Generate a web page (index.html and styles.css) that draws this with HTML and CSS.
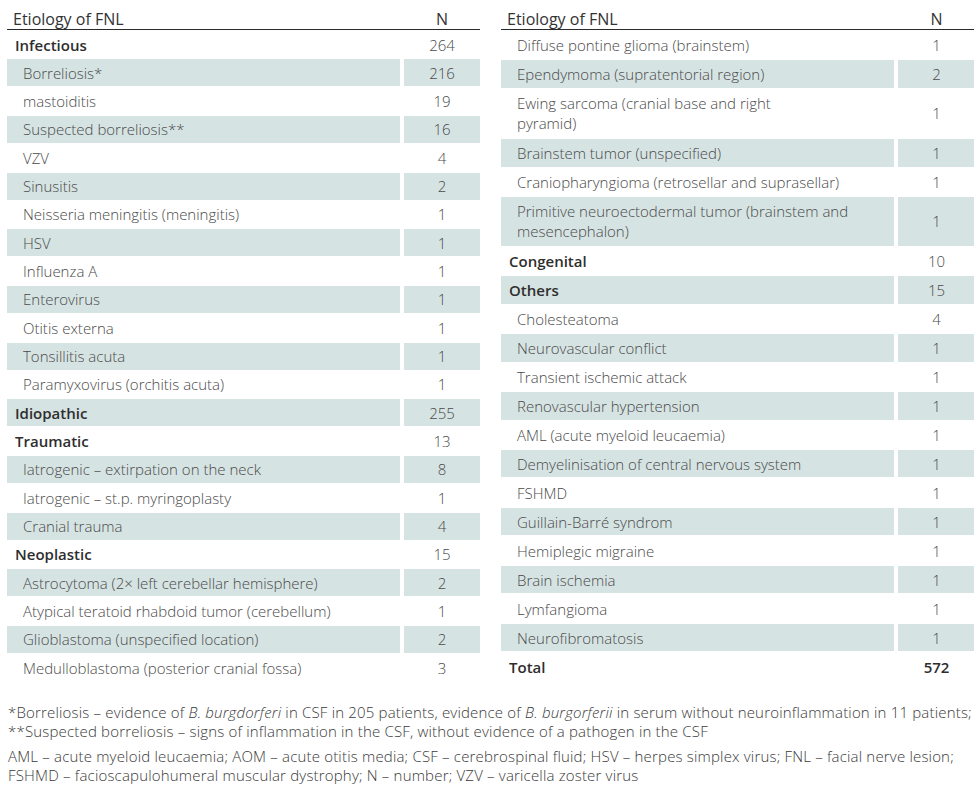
FILE: index.html
```html
<!DOCTYPE html>
<html lang="en">
<head>
<meta charset="utf-8">
<title>Etiology of FNL</title>
<link rel="stylesheet" href="styles.css">
</head>
<body>
<div class="page">
  <div class="tables">
    <div class="tbl left">
      <div class="row head"><div class="name">Etiology of FNL</div><div class="n">N</div></div>
      <div class="body">
        <div class="row cat"><div class="name">Infectious</div><div class="n">264</div></div>
        <div class="row sh"><div class="name">Borreliosis*</div><div class="n">216</div></div>
        <div class="row"><div class="name">mastoiditis</div><div class="n">19</div></div>
        <div class="row sh"><div class="name">Suspected borreliosis**</div><div class="n">16</div></div>
        <div class="row"><div class="name">VZV</div><div class="n">4</div></div>
        <div class="row sh"><div class="name">Sinusitis</div><div class="n">2</div></div>
        <div class="row"><div class="name">Neisseria meningitis (meningitis)</div><div class="n">1</div></div>
        <div class="row sh"><div class="name">HSV</div><div class="n">1</div></div>
        <div class="row"><div class="name">Influenza A</div><div class="n">1</div></div>
        <div class="row sh"><div class="name">Enterovirus</div><div class="n">1</div></div>
        <div class="row"><div class="name">Otitis externa</div><div class="n">1</div></div>
        <div class="row sh"><div class="name">Tonsillitis acuta</div><div class="n">1</div></div>
        <div class="row"><div class="name">Paramyxovirus (orchitis acuta)</div><div class="n">1</div></div>
        <div class="row cat sh"><div class="name">Idiopathic</div><div class="n">255</div></div>
        <div class="row cat"><div class="name">Traumatic</div><div class="n">13</div></div>
        <div class="row sh"><div class="name">Iatrogenic – extirpation on the neck</div><div class="n">8</div></div>
        <div class="row"><div class="name">Iatrogenic – st.p. myringoplasty</div><div class="n">1</div></div>
        <div class="row sh"><div class="name">Cranial trauma</div><div class="n">4</div></div>
        <div class="row cat"><div class="name">Neoplastic</div><div class="n">15</div></div>
        <div class="row sh"><div class="name">Astrocytoma (2× left cerebellar hemisphere)</div><div class="n">2</div></div>
        <div class="row"><div class="name">Atypical teratoid rhabdoid tumor (cerebellum)</div><div class="n">1</div></div>
        <div class="row sh"><div class="name">Glioblastoma (unspecified location)</div><div class="n">2</div></div>
        <div class="row"><div class="name">Medulloblastoma (posterior cranial fossa)</div><div class="n">3</div></div>
      </div>
    </div>
    <div class="tbl right">
      <div class="row head"><div class="name">Etiology of FNL</div><div class="n">N</div></div>
      <div class="body">
        <div class="row"><div class="name">Diffuse pontine glioma (brainstem)</div><div class="n">1</div></div>
        <div class="row sh"><div class="name">Ependymoma (supratentorial region)</div><div class="n">2</div></div>
        <div class="row two"><div class="name">Ewing sarcoma (cranial base and right<br>pyramid)</div><div class="n">1</div></div>
        <div class="row sh"><div class="name">Brainstem tumor (unspecified)</div><div class="n">1</div></div>
        <div class="row"><div class="name">Craniopharyngioma (retrosellar and suprasellar)</div><div class="n">1</div></div>
        <div class="row sh two"><div class="name">Primitive neuroectodermal tumor (brainstem and<br>mesencephalon)</div><div class="n">1</div></div>
        <div class="row cat"><div class="name">Congenital</div><div class="n">10</div></div>
        <div class="row cat sh"><div class="name">Others</div><div class="n">15</div></div>
        <div class="row"><div class="name">Cholesteatoma</div><div class="n">4</div></div>
        <div class="row sh"><div class="name">Neurovascular conflict</div><div class="n">1</div></div>
        <div class="row"><div class="name">Transient ischemic attack</div><div class="n">1</div></div>
        <div class="row sh"><div class="name">Renovascular hypertension</div><div class="n">1</div></div>
        <div class="row"><div class="name">AML (acute myeloid leucaemia)</div><div class="n">1</div></div>
        <div class="row sh"><div class="name">Demyelinisation of central nervous system</div><div class="n">1</div></div>
        <div class="row"><div class="name">FSHMD</div><div class="n">1</div></div>
        <div class="row sh"><div class="name">Guillain-Barré syndrom</div><div class="n">1</div></div>
        <div class="row"><div class="name">Hemiplegic migraine</div><div class="n">1</div></div>
        <div class="row sh"><div class="name">Brain ischemia</div><div class="n">1</div></div>
        <div class="row"><div class="name">Lymfangioma</div><div class="n">1</div></div>
        <div class="row sh"><div class="name">Neurofibromatosis</div><div class="n">1</div></div>
        <div class="row cat total"><div class="name">Total</div><div class="n">572</div></div>
      </div>
    </div>
  </div>
  <div class="notes">
    <p>*Borreliosis – evidence of <i>B. burgdorferi</i> in CSF in 205 patients, evidence of <i>B. burgorferii</i> in serum without neuroinflammation in 11 patients;<br>**Suspected borreliosis – signs of inflammation in the CSF, without evidence of a pathogen in the CSF</p>
    <p>AML – acute myeloid leucaemia; AOM – acute otitis media; CSF – cerebrospinal fluid; HSV – herpes simplex virus; FNL – facial nerve lesion;<br>FSHMD – facioscapulohumeral muscular dystrophy; N – number; VZV – varicella zoster virus</p>
  </div>
</div>
</body>
</html>
```
FILE: styles.css
```css
* { box-sizing: border-box; }
html, body { margin: 0; padding: 0; background: #fff; }
body {
  font-family: "Open Sans", "Noto Sans", "Liberation Sans", sans-serif;
  font-size: 15px;
  font-weight: 300;
  color: #4a4a4a;
}
.page { padding: 8px 3px 0 7px; }
.tables {
  display: grid;
  grid-template-columns: 473px 473px;
  column-gap: 21px;
  align-items: start;
}
.row {
  display: grid;
  grid-template-columns: 1fr 76px;
  column-gap: 4px;
}
.row .name, .row .n {
  display: flex;
  align-items: center;
  min-height: 27px;
  line-height: 20px;
}
.row .name { padding-left: 16px; }
.row .n { justify-content: center; }
.right .row .n { padding-left: 1px; }
.head {
  border-bottom: 1px solid #2a2a2a;
  height: 22px;
  color: #333;
  font-weight: 400;
  font-size: 16px;
}
.head .name, .head .n { min-height: 0; align-items: flex-start; line-height: 22px; }
.head .name { padding-left: 6px; }
.body {
  display: flex;
  flex-direction: column;
  row-gap: 1.33px;
  padding-top: 1px;
}
.right .body { row-gap: 1.3px; }
.right .row .name, .right .row .n { min-height: 27.7px; }
.right .row.two .name, .right .row.two .n { min-height: 48.7px; }
.sh .name, .sh .n { background: #d6e3e3; }
.cat .name {
  padding-left: 8px;
  font-weight: 600;
  color: #2e2e2e;
}
.total .n { font-weight: 600; color: #2e2e2e; }
.notes {
  margin-top: 22px;
  padding-left: 1px;
  font-family: "Open Sans", "Liberation Sans", sans-serif;
  font-stretch: 90%;
  font-weight: 300;
  font-size: 15px;
  line-height: 19px;
  letter-spacing: 0.18px;
  color: #3a3a3a;
  white-space: nowrap;
}
.notes p { margin: 0 0 6px 0; }
```
